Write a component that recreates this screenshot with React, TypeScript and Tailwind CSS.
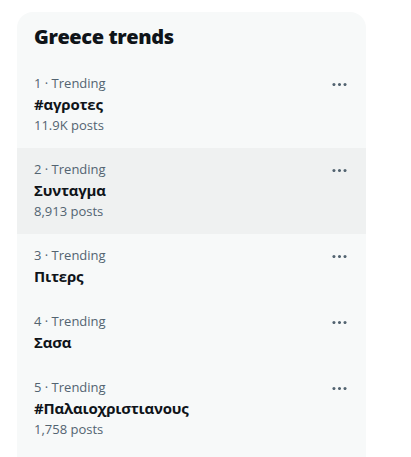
import React from "react";

const trends = [
  { rank: 1, name: "#αγροτες", posts: "11.9K posts" },
  { rank: 2, name: "Συνταγμα", posts: "8,913 posts", hover: true },
  { rank: 3, name: "Πιτερς" },
  { rank: 4, name: "Σασα" },
  { rank: 5, name: "#Παλαιοχριστιανους", posts: "1,758 posts" },
];

function MoreIcon() {
  return (
    <svg viewBox="0 0 24 24" className="w-[19px] h-[19px]" fill="#536471">
      <path d="M3 12c0-1.1.9-2 2-2s2 .9 2 2-.9 2-2 2-2-.9-2-2zm9 2c1.1 0 2-.9 2-2s-.9-2-2-2-2 .9-2 2 .9 2 2 2zm7 0c1.1 0 2-.9 2-2s-.9-2-2-2-2 .9-2 2 .9 2 2 2z" />
    </svg>
  );
}

export default function App() {
  return (
    <div
      className="w-[411px] h-[457px] bg-white overflow-hidden"
      style={{ fontFamily: '"Open Sans", "Noto Sans", sans-serif' }}
    >
      <div className="ml-[17px] mt-[12px] w-[349px] rounded-t-[16px] bg-[#f7f9f9] pb-10">
        <div className="px-[17px] pt-[12px] pb-[12px] h-[50px]">
          <h2 className="text-[20px] leading-[26px] font-extrabold text-[#0f1419] tracking-[-0.4px]">
            Greece trends
          </h2>
        </div>
        {trends.map((t) => (
          <div
            key={t.rank}
            className={`flex justify-between px-[17px] pt-[12px] ${t.posts ? "pb-[14px]" : "pb-[12px]"} ${t.hover ? "bg-[#eff1f1]" : ""}`}
          >
            <div className="flex flex-col">
              <div className="text-[13px] leading-[18px] text-[#536471]">
                {t.rank} · Trending
              </div>
              <div className="text-[15px] leading-[24px] font-bold text-[#0f1419] tracking-[-0.2px]">
                {t.name}
              </div>
              {t.posts && (
                <div className="text-[13px] leading-[18px] text-[#536471]">
                  {t.posts}
                </div>
              )}
            </div>
            <div className="pt-[1px] h-fit">
              <MoreIcon />
            </div>
          </div>
        ))}
      </div>
    </div>
  );
}
